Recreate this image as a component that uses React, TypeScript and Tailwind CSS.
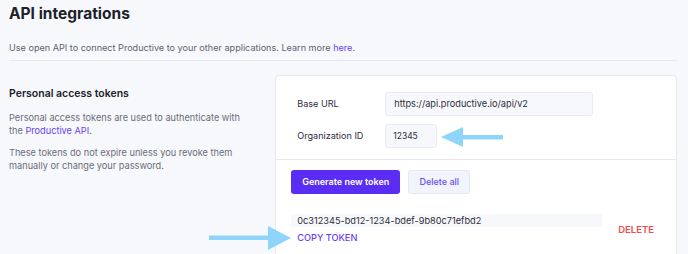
import React from 'react';

const ArrowLeft: React.FC<{ className?: string }> = ({ className }) => (
  <svg className={className} width="64" height="22" viewBox="0 0 64 22">
    <polygon points="0,11 22,1 22,21" fill="#8fd5fa" />
    <rect x="20" y="9" width="42" height="4.5" fill="#8fd5fa" />
  </svg>
);

const ArrowRight: React.FC<{ className?: string }> = ({ className }) => (
  <svg className={className} width="82" height="26" viewBox="0 0 82 26">
    <rect x="0" y="10.5" width="62" height="4.5" fill="#8fd5fa" />
    <polygon points="82,13 59,1 59,25" fill="#8fd5fa" />
  </svg>
);

export default function App() {
  return (
    <div
      className="relative h-[254px] w-[688px] overflow-hidden bg-[#f7f8fc] text-[#2c2d3a]"
      style={{ fontFamily: 'Inter, "Noto Sans", sans-serif' }}
    >
      <div className="pl-[9px] pr-[11px] pt-[2px]">
        <h1 className="text-[15.5px] font-bold leading-[24px] text-[#20212b]">API integrations</h1>
        <p className="mt-[15px] text-[9.1px] leading-[14px] text-[#5f6170]">
          Use open API to connect Productive to your other applications. Learn more{' '}
          <a className="text-[#6a3ff2]">here</a>.
        </p>
        <div className="mt-[5px] h-px bg-[#e7e9f1]" />

        <div className="mt-[14px] flex">
          <div className="w-[267px] pt-[12px]">
            <h2 className="text-[10.5px] font-semibold leading-[14px] text-[#20212b]">Personal access tokens</h2>
            <p className="mt-[10px] w-[240px] text-[9.2px] leading-[13px] text-[#6a6c7a]">
              Personal access tokens are used to authenticate with the <span className="text-[#6a3ff2]">Productive API</span>.
            </p>
            <p className="mt-[9px] w-[240px] text-[9.2px] leading-[13px] text-[#6a6c7a]">
              These tokens do not expire unless you revoke them manually or change your password.
            </p>
          </div>

          <div className="h-[200px] flex-1 rounded-[4px] border border-[#e6e8f1] bg-white">
            <div className="flex flex-col gap-[8px] border-b border-[#e6e8f1] pb-[11px] pl-[21px] pt-[16px]">
              <div className="flex items-center">
                <span className="w-[88px] text-[9.1px] text-[#2c2d3a]">Base URL</span>
                <div className="flex h-[24px] w-[208px] items-center rounded-[3px] border border-[#e9ecf4] bg-[#f7f8fc] px-[8px] text-[9.2px] text-[#2c2d3a]">
                  https://api.productive.io/api/v2
                </div>
              </div>
              <div className="flex items-center">
                <span className="w-[88px] text-[9.1px] text-[#2c2d3a]">Organization ID</span>
                <div className="flex h-[24px] w-[52px] items-center rounded-[3px] border border-[#e9ecf4] bg-[#f7f8fc] px-[7px] text-[8.5px] text-[#2c2d3a]">
                  12345
                </div>
              </div>
            </div>

            <div className="pl-[15px] pr-[22px] pt-[10px]">
              <div className="flex gap-[8px]">
                <button className="h-[24px] w-[109px] rounded-[3px] bg-[#5a2df5] text-[9px] font-semibold text-white">
                  Generate new token
                </button>
                <button className="h-[24px] w-[62px] rounded-[3px] border border-[#e3e8f8] bg-[#f1f4fd] text-[9px] font-medium text-[#6a4ef0]">
                  Delete all
                </button>
              </div>

              <div className="mt-[20px] flex items-start">
                <div className="w-[311px]">
                  <div className="flex h-[13px] items-center bg-[#f7f8fc] px-[6px] text-[9.2px] text-[#2c2d3a]">
                    0c312345-bd12-1234-bdef-9b80c71efbd2
                  </div>
                  <div className="mt-[5px] pl-[6px] text-[9.2px] font-medium leading-[12px] text-[#6a3ff2]">COPY TOKEN</div>
                </div>
                <div className="ml-[16px] mt-[9px] text-[9.5px] font-semibold text-[#ef4e4e]">DELETE</div>
              </div>
            </div>
          </div>
        </div>
      </div>

      <ArrowLeft className="absolute left-[441px] top-[126px]" />
      <ArrowRight className="absolute left-[209px] top-[225px]" />
    </div>
  );
}
